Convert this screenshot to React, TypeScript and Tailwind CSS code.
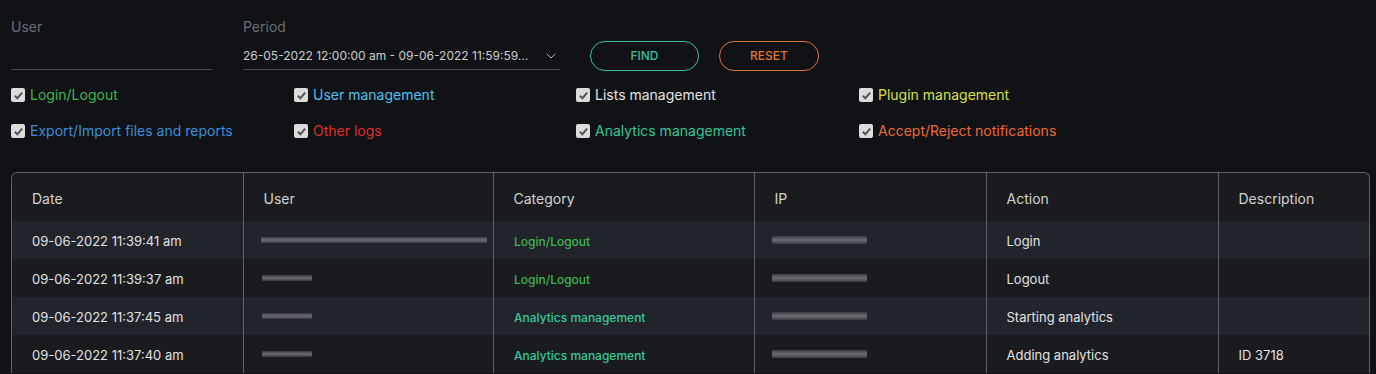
import { ChevronDown } from 'lucide-react'

type Row = {
    date: string
    userWide: boolean
    category: string
    categoryColor: string
    action: string
    description: string
}

const filters = [
    { label: 'Login/Logout', color: 'text-[#3fb54f]' },
    { label: 'User management', color: 'text-[#4fc0ef]' },
    { label: 'Lists management', color: 'text-[#e4e4e4]' },
    { label: 'Plugin management', color: 'text-[#d6e24a]' },
    { label: 'Export/Import files and reports', color: 'text-[#3a8fdc]' },
    { label: 'Other logs', color: 'text-[#dd2f2f]' },
    { label: 'Analytics management', color: 'text-[#35c79a]' },
    { label: 'Accept/Reject notifications', color: 'text-[#ee6a36]' },
]

const rows: Row[] = [
    {
        date: '09-06-2022 11:39:41 am',
        userWide: true,
        category: 'Login/Logout',
        categoryColor: 'text-[#3fb54f]',
        action: 'Login',
        description: '',
    },
    {
        date: '09-06-2022 11:39:37 am',
        userWide: false,
        category: 'Login/Logout',
        categoryColor: 'text-[#3fb54f]',
        action: 'Logout',
        description: '',
    },
    {
        date: '09-06-2022 11:37:45 am',
        userWide: false,
        category: 'Analytics management',
        categoryColor: 'text-[#35c79a]',
        action: 'Starting analytics',
        description: '',
    },
    {
        date: '09-06-2022 11:37:40 am',
        userWide: false,
        category: 'Analytics management',
        categoryColor: 'text-[#35c79a]',
        action: 'Adding analytics',
        description: 'ID 3718',
    },
]

const columns = ['Date', 'User', 'Category', 'IP', 'Action', 'Description']
const widths = ['w-[231px]', 'w-[250px]', 'w-[261px]', 'w-[232px]', 'w-[232px]', '']

const Checkbox = () => (
    <span className="flex h-[14px] w-[14px] shrink-0 items-center justify-center rounded-[2px] bg-[#dcdcdc]">
        <svg width="11" height="11" viewBox="0 0 12 12">
            <path
                d="M2 6.3 L4.8 9 L10 2.8"
                fill="none"
                stroke="#555"
                strokeWidth="2.2"
            />
        </svg>
    </span>
)

// blurred placeholder for hidden values
const Blur = ({ className }: { className: string }) => (
    <div
        className={`rounded-[1px] bg-gradient-to-b from-[#3a3c42] via-[#6b6d72] to-[#3a3c42] blur-[0.6px] ${className}`}
    />
)

const App = () => {
    return (
        <div className="min-h-screen bg-[#111216] pl-[11px] pr-[6px] pt-[18px] font-['Inter',sans-serif]">
            {/* filters */}
            <div className="flex items-end">
                <div className="w-[201px]">
                    <p className="text-sm leading-[18px] text-[#6a6d73]">User</p>
                    <div className="h-[34px] border-b border-[#4b4c51]" />
                </div>
                <div className="ml-[31px] w-[317px]">
                    <p className="text-sm leading-[18px] text-[#6a6d73]">Period</p>
                    <div className="flex h-[34px] items-center justify-between border-b border-[#4b4c51] pt-[6px]">
                        <span className="text-xs text-[#cdcdcd]">
                            26-05-2022 12:00:00 am - 09-06-2022 11:59:59...
                        </span>
                        <ChevronDown
                            size={16}
                            strokeWidth={1.3}
                            className="mr-[1px] text-[#c9c9c9]"
                        />
                    </div>
                </div>
                <button className="mb-[-1px] ml-[30px] h-[30px] w-[109px] rounded-full border border-[#3dbf9c] text-xs font-medium text-[#3dbf9c]">
                    FIND
                </button>
                <button className="mb-[-1px] ml-[20px] h-[30px] w-[100px] rounded-full border border-[#e0743a] text-xs font-medium text-[#e0743a]">
                    RESET
                </button>
            </div>

            <div className="mt-[15px] grid grid-cols-[283px_282px_283px_1fr] gap-y-[16px]">
                {filters.map((f) => (
                    <label
                        key={f.label}
                        className="flex h-[20px] items-center gap-[5px]"
                    >
                        <Checkbox />
                        <span className={`text-sm ${f.color}`}>{f.label}</span>
                    </label>
                ))}
            </div>

            {/* table */}
            <div className="mt-[31px] overflow-hidden rounded-t-[6px] border border-b-0 border-[#5f6066] bg-[#1a1b1f]">
                <table className="w-full table-fixed border-collapse">
                    <thead>
                        <tr className="h-[48px]">
                            {columns.map((c, i) => (
                                <th
                                    key={c}
                                    className={`border-l border-[#5f6066] px-[20px] pt-[3px] text-left text-sm font-normal text-[#d2d2d2] first:border-l-0 ${widths[i]}`}
                                >
                                    {c}
                                </th>
                            ))}
                        </tr>
                    </thead>
                    <tbody>
                        {rows.map((r, i) => (
                            <tr
                                key={r.date}
                                className={`h-[38px] ${i % 2 === 0 ? 'bg-[#22242b]' : 'bg-[#1a1b1f]'}`}
                            >
                                <td className="px-[20px] pt-[3px] text-[13px] text-[#e2e2e2]">
                                    {r.date}
                                </td>
                                <td className="border-l border-[#5f6066] pl-[17px] pr-[5px]">
                                    {r.userWide ? (
                                        <Blur className="h-[6px] w-[226px]" />
                                    ) : (
                                        <Blur className="ml-[1px] h-[6px] w-[50px]" />
                                    )}
                                </td>
                                <td
                                    className={`border-l border-[#5f6066] pl-[20.5px] pr-[20px] pt-[3px] text-xs font-medium ${r.categoryColor}`}
                                >
                                    {r.category}
                                </td>
                                <td className="border-l border-[#5f6066] px-[17px]">
                                    <Blur className="h-[8px] w-[95px]" />
                                </td>
                                <td className="border-l border-[#5f6066] px-[20px] pt-[3px] text-[13px] text-[#e2e2e2]">
                                    {r.action}
                                </td>
                                <td className="border-l border-[#5f6066] px-[20px] pt-[3px] text-[13px] text-[#e2e2e2]">
                                    {r.description}
                                </td>
                            </tr>
                        ))}
                    </tbody>
                </table>
            </div>
        </div>
    )
}

export default App
